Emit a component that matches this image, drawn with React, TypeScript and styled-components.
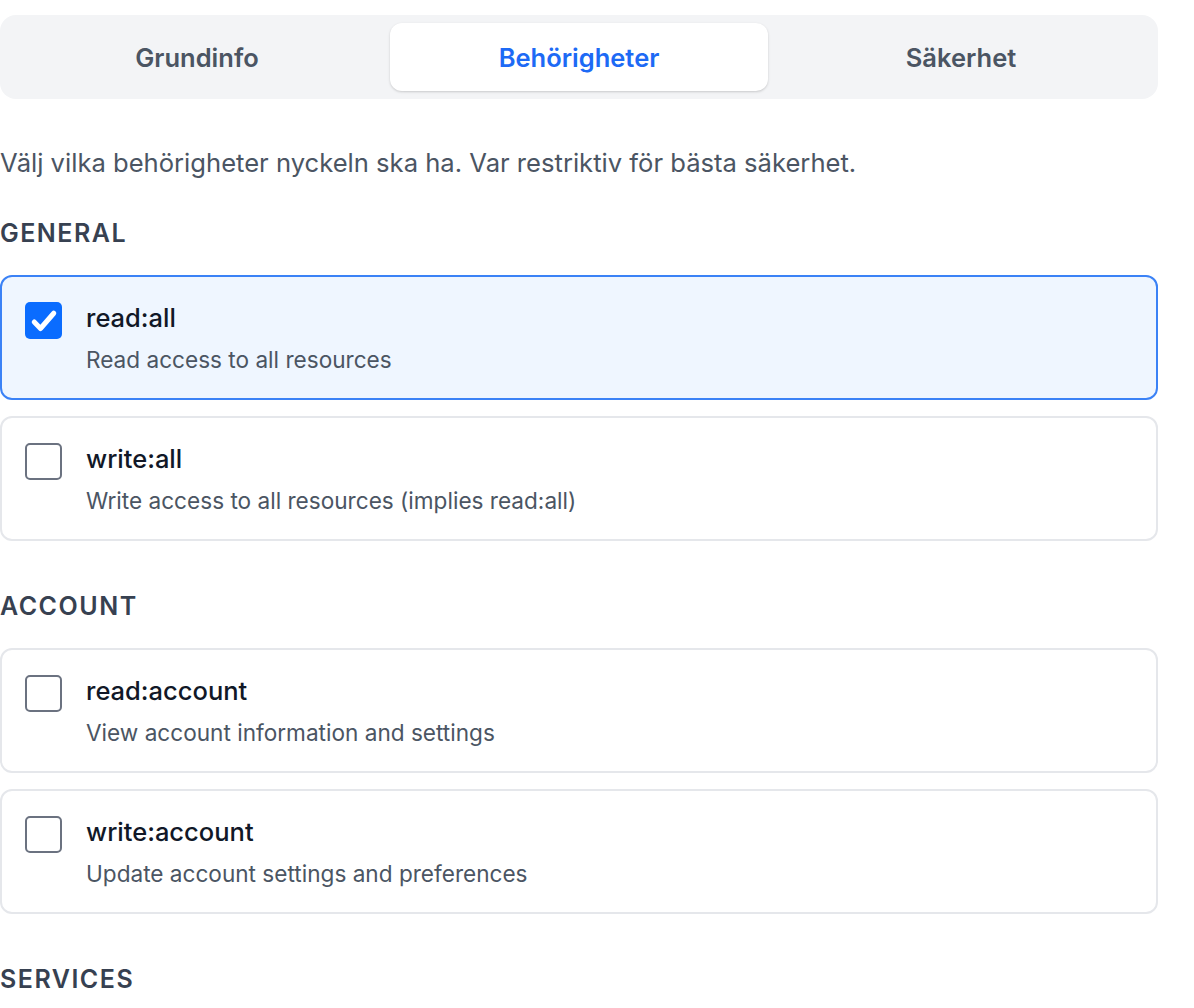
import React, {useState} from 'react';
import styled, {createGlobalStyle} from 'styled-components';

const Global = createGlobalStyle`
  html, body {
    margin: 0;
    padding: 0;
    background: #ffffff;
  }
  body {
    font-family: Inter, "Noto Sans", "Liberation Sans", sans-serif;
    -webkit-font-smoothing: antialiased;
  }
`;

interface Permission {
  key: string;
  description: string;
}

interface Group {
  title: string;
  items: Permission[];
}

const groups: Group[] = [
  {
    title: 'General',
    items: [
      {key: 'read:all', description: 'Read access to all resources'},
      {key: 'write:all', description: 'Write access to all resources (implies read:all)'},
    ],
  },
  {
    title: 'Account',
    items: [
      {key: 'read:account', description: 'View account information and settings'},
      {key: 'write:account', description: 'Update account settings and preferences'},
    ],
  },
  {
    title: 'Services',
    items: [],
  },
];

const tabs = ['Grundinfo', 'Behörigheter', 'Säkerhet'];

const Page = styled.div`
  width: 1158px;
  padding-top: 15px;
`;

const TabBar = styled.div`
  display: grid;
  grid-template-columns: repeat(3, 1fr);
  gap: 4px;
  padding: 8px;
  background: #f3f4f6;
  border-radius: 16px;
`;

interface TabProps {
  active: boolean;
}

const Tab = styled.button<TabProps>`
  height: 68px;
  border: none;
  border-radius: 12px;
  font-family: inherit;
  font-size: 25.5px;
  font-weight: 600;
  cursor: pointer;
  background: ${(p: TabProps) => (p.active ? '#ffffff' : 'transparent')};
  color: ${(p: TabProps) => (p.active ? '#1d6af5' : '#4b5563')};
  box-shadow: ${(p: TabProps) =>
    p.active ? '0 1px 3px rgba(0,0,0,0.12), 0 1px 2px rgba(0,0,0,0.06)' : 'none'};
`;

const Intro = styled.p`
  margin: 48px 0 0;
  font-size: 25.6px;
  line-height: 32px;
  color: #4b5563;
`;

const Section = styled.section`
  margin-top: 39px;
  & + & {
    margin-top: 50px;
  }
`;

const SectionTitle = styled.h3`
  margin: 0 0 27px;
  font-size: 25px;
  line-height: 30px;
  font-weight: 600;
  letter-spacing: 0.06em;
  text-transform: uppercase;
  color: #374151;
`;

const List = styled.div`
  display: flex;
  flex-direction: column;
  gap: 16px;
`;

interface CardProps {
  selected: boolean;
}

const Card = styled.label<CardProps>`
  display: flex;
  align-items: flex-start;
  gap: 24px;
  height: 125px;
  box-sizing: border-box;
  padding: 25px 23px 23px;
  border-radius: 12px;
  cursor: pointer;
  border: 2px solid ${(p: CardProps) => (p.selected ? '#3b82f6' : '#e5e7eb')};
  background: ${(p: CardProps) => (p.selected ? '#eff6ff' : '#ffffff')};
`;

const Box = styled.span<CardProps>`
  flex: none;
  width: 37px;
  height: 37px;
  box-sizing: border-box;
  border-radius: 5px;
  display: flex;
  align-items: center;
  justify-content: center;
  border: ${(p: CardProps) => (p.selected ? 'none' : '2px solid #6b7280')};
  background: ${(p: CardProps) => (p.selected ? '#0a6cff' : '#ffffff')};
`;

const Text = styled.div`
  display: flex;
  flex-direction: column;
  gap: 11px;
`;

const Key = styled.div`
  font-size: 25.5px;
  line-height: 32px;
  font-weight: 500;
  color: #111827;
`;

const Description = styled.div`
  font-size: 22.6px;
  line-height: 30px;
  color: #4b5563;
`;

const Check = () => (
  <svg width="30" height="30" viewBox="0 0 24 24" fill="none">
    <path
      d="M4.2 12.8l5 5.2L19.8 5.8"
      stroke="#ffffff"
      strokeWidth="4"
      strokeLinecap="round"
      strokeLinejoin="round"
    />
  </svg>
);

export default function App() {
  const [active, setActive] = useState(1);
  const [selected, setSelected] = useState<string[]>(['read:all']);

  const toggle = (key: string) =>
    setSelected(s => (s.includes(key) ? s.filter(k => k !== key) : [...s, key]));

  return (
    <>
      <Global />
      <Page>
        <TabBar>
          {tabs.map((t, i) => (
            <Tab key={t} active={i === active} onClick={() => setActive(i)}>
              {t}
            </Tab>
          ))}
        </TabBar>
        <Intro>Välj vilka behörigheter nyckeln ska ha. Var restriktiv för bästa säkerhet.</Intro>
        {groups.map(g => (
          <Section key={g.title}>
            <SectionTitle>{g.title}</SectionTitle>
            {g.items.length > 0 && (
              <List>
                {g.items.map(item => {
                  const on = selected.includes(item.key);
                  return (
                    <Card key={item.key} selected={on} onClick={() => toggle(item.key)}>
                      <Box selected={on}>{on && <Check />}</Box>
                      <Text>
                        <Key>{item.key}</Key>
                        <Description>{item.description}</Description>
                      </Text>
                    </Card>
                  );
                })}
              </List>
            )}
          </Section>
        ))}
      </Page>
    </>
  );
}
